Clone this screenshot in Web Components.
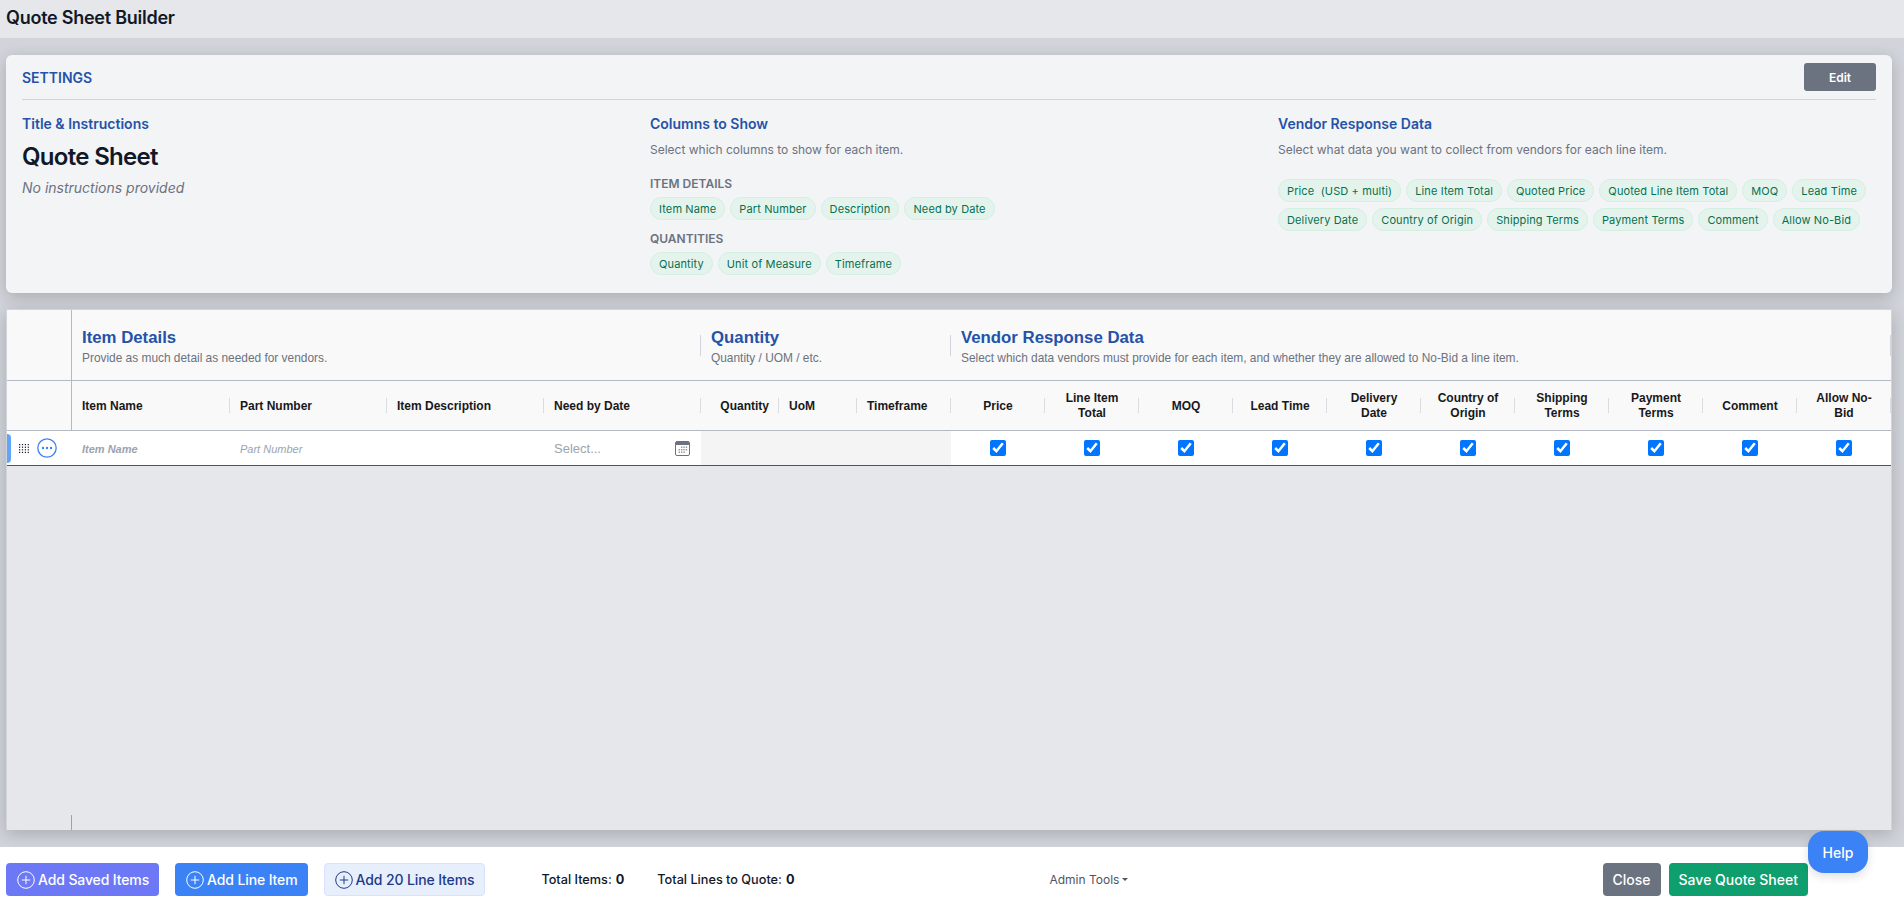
<!DOCTYPE html>
<html>
<head>
<meta charset="utf-8">
<title>Quote Sheet Builder</title>
<style>
  html, body { margin: 0; height: 100%; }
  body { font-family: Inter, "Liberation Sans", sans-serif; color: #111827; background: #d1d5db; overflow: hidden; }
</style>
</head>
<body>
<qs-app>
  <qs-top-bar>Quote Sheet Builder</qs-top-bar>

  <qs-settings>
    <qs-settings-column heading="Title &amp; Instructions">
      <h-title>Quote Sheet</h-title>
      <h-note>No instructions provided</h-note>
    </qs-settings-column>

    <qs-settings-column heading="Columns to Show" hint="Select which columns to show for each item.">
      <qs-pill-group label="Item Details">
        <qs-pill>Item Name</qs-pill><qs-pill>Part Number</qs-pill><qs-pill>Description</qs-pill><qs-pill>Need by Date</qs-pill>
      </qs-pill-group>
      <qs-pill-group label="Quantities">
        <qs-pill>Quantity</qs-pill><qs-pill>Unit of Measure</qs-pill><qs-pill>Timeframe</qs-pill>
      </qs-pill-group>
    </qs-settings-column>

    <qs-settings-column heading="Vendor Response Data" hint="Select what data you want to collect from vendors for each line item.">
      <qs-pill-group>
        <qs-pill>Price&nbsp; (USD + multi)</qs-pill><qs-pill>Line Item Total</qs-pill><qs-pill>Quoted Price</qs-pill><qs-pill>Quoted Line Item Total</qs-pill><qs-pill>MOQ</qs-pill><qs-pill>Lead Time</qs-pill>
        <qs-pill>Delivery Date</qs-pill><qs-pill>Country of Origin</qs-pill><qs-pill>Shipping Terms</qs-pill><qs-pill>Payment Terms</qs-pill><qs-pill>Comment</qs-pill><qs-pill>Allow No-Bid</qs-pill>
      </qs-pill-group>
    </qs-settings-column>
  </qs-settings>

  <qs-table>
    <qs-group-row>
      <qs-group-head heading="Item Details" hint="Provide as much detail as needed for vendors." style="grid-column: span 4"></qs-group-head>
      <qs-group-head heading="Quantity" hint="Quantity / UOM / etc." style="grid-column: span 3"></qs-group-head>
      <qs-group-head heading="Vendor Response Data" hint="Select which data vendors must provide for each item, and whether they are allowed to No-Bid a line item." style="grid-column: span 10"></qs-group-head>
    </qs-group-row>

    <qs-head-row>
      <qs-col-head align="left">Item Name</qs-col-head>
      <qs-col-head align="left">Part Number</qs-col-head>
      <qs-col-head align="left">Item Description</qs-col-head>
      <qs-col-head align="left">Need by Date</qs-col-head>
      <qs-col-head align="right">Quantity</qs-col-head>
      <qs-col-head align="left">UoM</qs-col-head>
      <qs-col-head align="left">Timeframe</qs-col-head>
      <qs-col-head>Price</qs-col-head>
      <qs-col-head>Line Item Total</qs-col-head>
      <qs-col-head>MOQ</qs-col-head>
      <qs-col-head>Lead Time</qs-col-head>
      <qs-col-head>Delivery Date</qs-col-head>
      <qs-col-head>Country of Origin</qs-col-head>
      <qs-col-head>Shipping Terms</qs-col-head>
      <qs-col-head>Payment Terms</qs-col-head>
      <qs-col-head>Comment</qs-col-head>
      <qs-col-head>Allow No-Bid</qs-col-head>
    </qs-head-row>

    <qs-line-row></qs-line-row>
  </qs-table>

  <qs-bottom-bar>
    <qs-button kind="indigo" plus>Add Saved Items</qs-button>
    <qs-button kind="blue" plus>Add Line Item</qs-button>
    <qs-button kind="pale" plus>Add 20 Line Items</qs-button>
    <qs-total label="Total Items:" style="margin-left: 40px">0</qs-total>
    <qs-total label="Total Lines to Quote:" style="margin-left: 33px">0</qs-total>
    <qs-admin-tools>Admin Tools</qs-admin-tools>
    <qs-button kind="gray" style="margin-left: auto">Close</qs-button>
    <qs-button kind="green" style="margin-left: 8px; margin-right: 96px">Save Quote Sheet</qs-button>
  </qs-bottom-bar>

  <qs-help>Help</qs-help>
</qs-app>

<script>
// small helper, every element below is just a template plus an open shadow root
function define(name, html, setup) {
  const tpl = document.createElement("template");
  tpl.innerHTML = html;
  customElements.define(name, class extends HTMLElement {
    constructor() {
      super();
      this.attachShadow({ mode: "open" });
      this.shadowRoot.appendChild(tpl.content.cloneNode(true));
    }
    connectedCallback() {
      if (setup) setup(this, this.shadowRoot);
    }
  });
}

const COLS = "65px 158px 157px 157px 157px 78px 78px 94px repeat(10, 94px)";
const BLUE = "#2452a8";
const CARD_SHADOW = "0 4px 16px rgba(0,0,0,.2)";

define("qs-app", `
  <style>
    :host { display: flex; flex-direction: column; height: 903px; position: relative; }
  </style>
  <slot></slot>
`);

define("qs-top-bar", `
  <style>
    :host {
      display: flex; align-items: center; flex: none; height: 38px; box-sizing: border-box;
      padding: 0 6px 3px; background: #e5e7eb; font-size: 18px; font-weight: 600; letter-spacing: -.25px; color: #111827;
    }
  </style>
  <slot></slot>
`);

define("qs-settings", `
  <style>
    :host {
      display: block; flex: none; height: 238px; box-sizing: border-box; margin: 17px 12px 0 6px; padding: 8px 16px 0 16px;
      background: #f3f4f6; border-radius: 6px;
      box-shadow: ${CARD_SHADOW};
    }
    .head {
      display: flex; align-items: center; justify-content: space-between; height: 37px; box-sizing: border-box;
      padding-bottom: 8px; border-bottom: 1px solid #d1d5db;
    }
    .label { font-size: 14px; font-weight: 600; color: ${BLUE}; }
    button {
      width: 72px; height: 28px; border: 0; border-radius: 3px; background: #6b7280; color: #fff;
      font: 600 12px Inter, sans-serif;
    }
    .cols { display: grid; grid-template-columns: 596px 596px 1fr; column-gap: 32px; padding-top: 14px; }
  </style>
  <div class="head"><span class="label">SETTINGS</span><button>Edit</button></div>
  <div class="cols"><slot></slot></div>
`);

define("qs-settings-column", `
  <style>
    :host { display: block; min-width: 0; }
    .heading { font-size: 14px; line-height: 20px; font-weight: 600; color: ${BLUE}; }
    .hint { font-size: 12px; line-height: 16px; color: #6b7280; margin-top: 8px; }
    .hint:empty { display: none; }
  </style>
  <div class="heading"></div>
  <div class="hint"></div>
  <slot></slot>
`, (el, root) => {
  root.querySelector(".heading").textContent = el.getAttribute("heading");
  root.querySelector(".hint").textContent = el.getAttribute("hint") || "";
});

define("h-title", `
  <style>:host { display: block; margin-top: 7px; font-size: 24px; line-height: 32px; font-weight: 600; letter-spacing: -.7px; color: #111827; }</style>
  <slot></slot>
`);

define("h-note", `
  <style>:host { display: block; margin-top: 5px; font-size: 14px; line-height: 20px; font-style: italic; color: #6b7280; }</style>
  <slot></slot>
`);

define("qs-pill-group", `
  <style>
    :host { display: block; margin-top: 21px; }
    :host([label]) { margin-top: 18px; }
    .label { font-size: 12px; line-height: 16px; font-weight: 600; color: #6b7280; text-transform: uppercase; margin-bottom: 5px; }
    .label:empty { display: none; }
    .pills { display: flex; flex-wrap: wrap; gap: 6px 5px; }
  </style>
  <div class="label"></div>
  <div class="pills"><slot></slot></div>
`, (el, root) => {
  const label = el.getAttribute("label") || "";
  root.querySelector(".label").textContent = label;
  if (label == "Quantities") el.style.marginTop = "11px";
});

define("qs-pill", `
  <style>
    :host {
      display: inline-flex; align-items: center; height: 23px; box-sizing: border-box; padding: 0 8px;
      border: 1px solid #d3efe2; border-radius: 12px; background: #e4f4ed; color: #05704f;
      font-size: 11px; letter-spacing: .12px; white-space: nowrap;
    }
  </style>
  <slot></slot>
`);

define("qs-table", `
  <style>
    :host {
      display: flex; flex-direction: column; flex: none; height: 521px; box-sizing: border-box; margin: 16px 12px 0 6px;
      --cols: ${COLS};
      background: #e5e7eb; border: 1px solid #d1d5db; border-bottom: 0;
      box-shadow: ${CARD_SHADOW};
      font-family: "Liberation Sans", Arial, sans-serif;
    }
    .foot { margin-top: auto; width: 65px; height: 15px; box-sizing: border-box; border-right: 1px solid #9ca3af; }
  </style>
  <slot></slot>
  <div class="foot"></div>
`);

define("qs-group-row", `
  <style>
    :host {
      display: grid; grid-template-columns: var(--cols); height: 71px; box-sizing: border-box;
      background: #f9f9f9; border-bottom: 1px solid #b4b9c4;
    }
    .corner { border-right: 1px solid #b4b9c4; }
  </style>
  <div class="corner"></div>
  <slot></slot>
`);

define("qs-group-head", `
  <style>
    :host {
      display: flex; flex-direction: column; justify-content: center; padding-left: 10px; padding-top: 3px;
      background: linear-gradient(#d1d5db, #d1d5db) right 25px / 1px 21px no-repeat;
    }
    .heading { font-size: 16.8px; line-height: 20px; font-weight: 700; color: ${BLUE}; }
    .hint { font-size: 11.9px; line-height: 14px; margin-top: 3px; color: #6b7280; white-space: nowrap; }
  </style>
  <div class="heading"></div>
  <div class="hint"></div>
`, (el, root) => {
  root.querySelector(".heading").textContent = el.getAttribute("heading");
  root.querySelector(".hint").textContent = el.getAttribute("hint");
});

define("qs-head-row", `
  <style>
    :host {
      display: grid; grid-template-columns: var(--cols); height: 50px; box-sizing: border-box;
      background: #f9f9f9; border-bottom: 1px solid #b4b9c4;
    }
    .corner { border-right: 1px solid #b4b9c4; }
  </style>
  <div class="corner"></div>
  <slot></slot>
`);

define("qs-col-head", `
  <style>
    :host {
      display: flex; align-items: center; justify-content: center; box-sizing: border-box; padding: 1px 10px 0;
      font-size: 12px; line-height: 15px; font-weight: 700; color: #18181b; text-align: center;
      background: linear-gradient(#d9dce1, #d9dce1) right center / 1px 15px no-repeat;
    }
    :host([align="left"]) { justify-content: flex-start; text-align: left; }
    :host([align="right"]) { justify-content: flex-end; text-align: right; }
  </style>
  <slot></slot>
`);

define("qs-line-row", `
  <style>
    :host {
      display: grid; grid-template-columns: var(--cols); height: 35px; box-sizing: border-box;
      background: #fff; border-bottom: 1px solid #4b5563;
      font-family: "Liberation Sans", Arial, sans-serif;
    }
    .tools { display: flex; align-items: center; }
    .handle { width: 4px; height: 29px; background: #60a5fa; border-radius: 0 4px 4px 0; margin-right: 8px; }
    .more { margin-left: 8px; }
    .cell { display: flex; align-items: center; padding: 1px 10px 0; font-size: 11px; font-style: italic; color: #9ca3af; }
    .name { font-weight: 700; }
    .date { justify-content: space-between; padding: 0 11px 0 10px; font-style: normal; font-size: 13px; }
    .muted { grid-column: span 3; background: #f4f4f5; }
    .check { display: flex; align-items: center; justify-content: center; }
    input { width: 16px; height: 16px; margin: 0; }
  </style>
  <div class="tools">
    <span class="handle"></span>
    <svg width="10" height="9" viewBox="0 0 10 9" fill="#111827">
      <rect x="0" y="0" width="1.2" height="1.2"/><rect x="2.9" y="0" width="1.2" height="1.2"/><rect x="5.8" y="0" width="1.2" height="1.2"/><rect x="8.7" y="0" width="1.2" height="1.2"/>
      <rect x="0" y="2.6" width="1.2" height="1.2"/><rect x="2.9" y="2.6" width="1.2" height="1.2"/><rect x="5.8" y="2.6" width="1.2" height="1.2"/><rect x="8.7" y="2.6" width="1.2" height="1.2"/>
      <rect x="0" y="5.2" width="1.2" height="1.2"/><rect x="2.9" y="5.2" width="1.2" height="1.2"/><rect x="5.8" y="5.2" width="1.2" height="1.2"/><rect x="8.7" y="5.2" width="1.2" height="1.2"/>
      <rect x="0" y="7.8" width="1.2" height="1.2"/><rect x="2.9" y="7.8" width="1.2" height="1.2"/><rect x="5.8" y="7.8" width="1.2" height="1.2"/><rect x="8.7" y="7.8" width="1.2" height="1.2"/>
    </svg>
    <svg class="more" width="20" height="20" viewBox="0 0 20 20">
      <circle cx="10" cy="10" r="9.2" fill="none" stroke="#3b82f6" stroke-width="1.3"/>
      <circle cx="6" cy="10" r="1.2" fill="#3b82f6"/><circle cx="10" cy="10" r="1.2" fill="#3b82f6"/><circle cx="14" cy="10" r="1.2" fill="#3b82f6"/>
    </svg>
  </div>
  <div class="cell name">Item Name</div>
  <div class="cell">Part Number</div>
  <div class="cell"></div>
  <div class="cell date">Select...
    <svg width="15" height="15" viewBox="0 0 15 15">
      <rect x=".5" y=".5" width="14" height="14" rx="1.5" fill="#fff" stroke="#6b7280"/>
      <rect x="1" y="1" width="13" height="3" fill="#6b7280"/>
      <g fill="#8b919c">
        <rect x="6" y="5.5" width="1.4" height="1.4"/><rect x="8.4" y="5.5" width="1.4" height="1.4"/><rect x="10.8" y="5.5" width="1.4" height="1.4"/>
        <rect x="3.6" y="8" width="1.4" height="1.4"/><rect x="6" y="8" width="1.4" height="1.4"/><rect x="8.4" y="8" width="1.4" height="1.4"/><rect x="10.8" y="8" width="1.4" height="1.4"/>
        <rect x="3.6" y="10.5" width="1.4" height="1.4"/><rect x="6" y="10.5" width="1.4" height="1.4"/><rect x="8.4" y="10.5" width="1.4" height="1.4"/>
      </g>
    </svg>
  </div>
  <div class="muted"></div>
  <div class="check"><input type="checkbox" checked></div>
  <div class="check"><input type="checkbox" checked></div>
  <div class="check"><input type="checkbox" checked></div>
  <div class="check"><input type="checkbox" checked></div>
  <div class="check"><input type="checkbox" checked></div>
  <div class="check"><input type="checkbox" checked></div>
  <div class="check"><input type="checkbox" checked></div>
  <div class="check"><input type="checkbox" checked></div>
  <div class="check"><input type="checkbox" checked></div>
  <div class="check"><input type="checkbox" checked></div>
`);

define("qs-bottom-bar", `
  <style>
    :host {
      display: flex; align-items: center; flex: none; height: 56px; box-sizing: border-box; margin-top: auto;
      padding: 9px 0 0 6px; background: #fff;
    }
    ::slotted(qs-button[plus]) { margin-right: 16px; }
  </style>
  <slot></slot>
`);

define("qs-button", `
  <style>
    :host {
      display: inline-flex; align-items: center; height: 33px; box-sizing: border-box; padding: 0 10px;
      border-radius: 4px; font-size: 14px; font-weight: 500; color: #fff; white-space: nowrap;
    }
    :host([plus]) { padding-left: 11px; letter-spacing: -.12px; }
    :host([kind="indigo"]) { background: #6d78f6; }
    :host([kind="blue"]) { background: #3b82f6; }
    :host([kind="pale"]) { background: #e8effc; border: 1px solid #d6e3fa; color: #1e3a8a; padding-left: 10px; }
    :host([kind="gray"]) { background: #6b7280; }
    :host([kind="green"]) { background: #0f9f6e; }
    svg { display: none; width: 18px; height: 18px; margin-right: 3px; }
    :host([plus]) svg { display: block; }
  </style>
  <svg viewBox="0 0 18 18" fill="none" stroke="currentColor" stroke-width="1">
    <circle cx="9" cy="9" r="8.3"/><path d="M9 4.8v8.4M4.8 9h8.4"/>
  </svg>
  <slot></slot>
`);

define("qs-total", `
  <style>
    :host { display: inline-flex; gap: 4px; font-size: 12.7px; font-weight: 500; color: #111827; white-space: nowrap; }
    b { font-weight: 700; }
  </style>
  <span class="label"></span><b><slot></slot></b>
`, (el, root) => {
  root.querySelector(".label").textContent = el.getAttribute("label");
});

define("qs-admin-tools", `
  <style>
    :host { display: inline-flex; align-items: center; margin-left: 255px; font-size: 12px; color: #4b5563; white-space: nowrap; }
    i { width: 0; height: 0; margin-left: 3px; border: 3px solid transparent; border-top-color: #4b5563; border-bottom: 0; }
  </style>
  <slot></slot><i></i>
`);

define("qs-help", `
  <style>
    :host {
      position: absolute; left: 1808px; top: 831px; width: 60px; height: 42px;
      display: flex; align-items: center; justify-content: center;
      border-radius: 16px; background: #3b82f6; color: #fff; font-size: 14px; font-weight: 500;
      box-shadow: 0 4px 10px rgba(0,0,0,.12);
    }
  </style>
  <slot></slot>
`);
</script>
</body>
</html>
